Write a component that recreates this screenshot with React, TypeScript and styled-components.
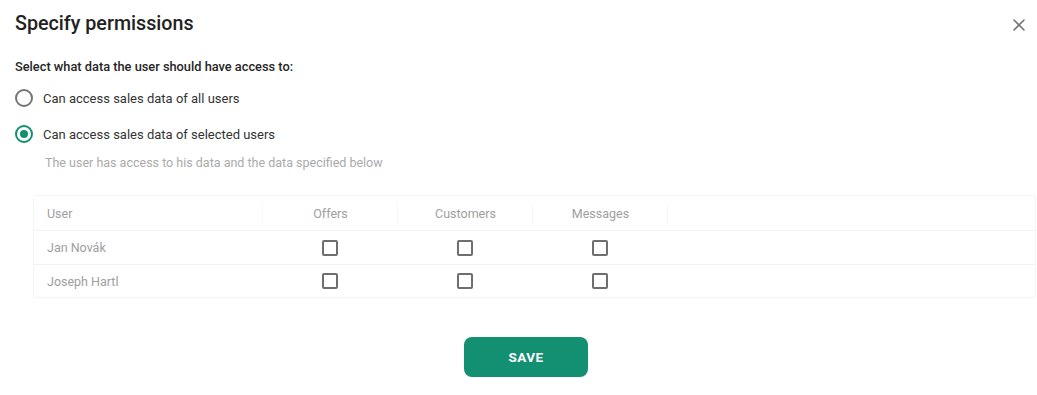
import React from "react";
import styled, { createGlobalStyle } from "styled-components";

const Global = createGlobalStyle`
  html, body { margin: 0; padding: 0; background: #fff; }
  body { font-family: Roboto, "Liberation Sans", Arial, sans-serif; color: #212121; }
  * { box-sizing: border-box; }
`;

const Dialog = styled.div`
  width: 1037px;
  height: 395px;
  display: flex;
  flex-direction: column;
  padding-left: 15px;
`;

const Header = styled.div`
  display: flex;
  align-items: center;
  justify-content: space-between;
  height: 44px;
  padding-top: 2px;
  padding-right: 12px;
`;

const Title = styled.h2`
  margin: 0;
  font-size: 19.7px;
  font-weight: 500;
  color: #222;
  letter-spacing: 0px;
`;

const CloseButton = styled.button`
  border: 0;
  background: none;
  padding: 0;
  width: 12px;
  height: 12px;
  display: flex;
  cursor: pointer;
  margin-top: 4px;
`;

const Prompt = styled.div`
  margin-top: 14px;
  font-size: 12.8px;
  font-weight: 500;
  color: #262626;
  line-height: 18px;
`;

const RadioRow = styled.label`
  display: flex;
  align-items: center;
  gap: 10px;
  height: 36px;
  font-size: 13px;
  color: #333;
  cursor: pointer;
`;

const RadioCircle = styled.span<{ $checked?: boolean }>`
  width: 18px;
  height: 18px;
  border-radius: 50%;
  border: 2px solid ${(p) => (p.$checked ? "#138f72" : "#757575")};
  display: flex;
  align-items: center;
  justify-content: center;
  &::after {
    content: "";
    width: 8px;
    height: 8px;
    border-radius: 50%;
    background: #138f72;
    display: ${(p) => (p.$checked ? "block" : "none")};
  }
`;

const Radios = styled.div`
  margin-top: 4px;
  display: flex;
  flex-direction: column;
`;

const Helper = styled.div`
  margin-left: 30px;
  margin-top: 2px;
  font-size: 12.5px;
  color: #aaaaaa;
  line-height: 18px;
`;

const Table = styled.div`
  margin: 23px 1px 0 18px;
  border: 1px solid #f4f4f4;
  border-radius: 3px;
  display: flex;
  flex-direction: column;
`;

const Row = styled.div<{ $height: number; $last?: boolean }>`
  display: grid;
  grid-template-columns: 229px 135px 135px 135px 1fr;
  align-items: center;
  height: ${(p) => p.$height}px;
  border-bottom: ${(p) => (p.$last ? "none" : "1px solid #f2f2f2")};
`;

const Cell = styled.div<{ $center?: boolean; $sep?: boolean }>`
  height: 100%;
  display: flex;
  align-items: center;
  justify-content: ${(p) => (p.$center ? "center" : "flex-start")};
  padding-left: ${(p) => (p.$center ? "0" : "13px")};
  font-size: 12.5px;
  color: #9e9e9e;
  position: relative;
  &::after {
    content: "";
    display: ${(p) => (p.$sep ? "block" : "none")};
    position: absolute;
    right: 0;
    top: 7px;
    bottom: 6px;
    width: 1px;
    background: #f7f7f7;
  }
`;

const Box = styled.span`
  width: 16px;
  height: 16px;
  border: 2px solid #6e6e6e;
  border-radius: 2px;
  display: block;
  margin-left: -2px;
  cursor: pointer;
`;

const Footer = styled.div`
  display: flex;
  justify-content: center;
  margin-top: 39px;
`;

const SaveButton = styled.button`
  width: 124px;
  height: 40px;
  border: 0;
  border-radius: 8px;
  background: #138f72;
  color: #fff;
  font-family: Roboto, "Liberation Sans", Arial, sans-serif;
  font-size: 13.5px;
  font-weight: 700;
  letter-spacing: 0.4px;
  cursor: pointer;
`;

const users = ["Jan Novák", "Joseph Hartl"];
const cols = ["Offers", "Customers", "Messages"];
const rowHeights = [34, 32];

export default function App() {
  return (
    <>
      <Global />
      <Dialog>
        <Header>
          <Title>Specify permissions</Title>
          <CloseButton aria-label="close">
            <svg width="12" height="12" viewBox="0 0 12 12">
              <path d="M1 1L11 11M11 1L1 11" stroke="#757575" strokeWidth="1.6" strokeLinecap="round" />
            </svg>
          </CloseButton>
        </Header>
        <Prompt>Select what data the user should have access to:</Prompt>
        <Radios>
          <RadioRow>
            <RadioCircle />
            Can access sales data of all users
          </RadioRow>
          <RadioRow>
            <RadioCircle $checked />
            Can access sales data of selected users
          </RadioRow>
        </Radios>
        <Helper>The user has access to his data and the data specified below</Helper>
        <Table>
          <Row $height={35}>
            <Cell $sep>User</Cell>
            {cols.map((c) => (
              <Cell key={c} $center $sep>
                {c}
              </Cell>
            ))}
            <Cell />
          </Row>
          {users.map((u, i) => (
            <Row key={u} $height={rowHeights[i]} $last={i === users.length - 1}>
              <Cell>{u}</Cell>
              {cols.map((c) => (
                <Cell key={c} $center>
                  <Box />
                </Cell>
              ))}
              <Cell />
            </Row>
          ))}
        </Table>
        <Footer>
          <SaveButton>SAVE</SaveButton>
        </Footer>
      </Dialog>
    </>
  );
}
